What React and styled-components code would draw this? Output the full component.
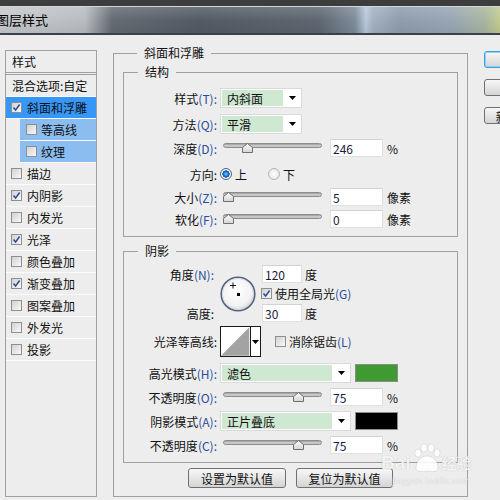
import styled, { createGlobalStyle } from "styled-components";

const GlobalStyle = createGlobalStyle`
  html, body {
    margin: 0;
    padding: 0;
  }
  body {
    width: 500px;
    height: 500px;
    overflow: hidden;
    background: #ededed;
    font-family: "Noto Sans CJK SC", "Liberation Sans", sans-serif;
    font-size: 12px;
    color: #111;
  }
`;

const Window = styled.div`
  position: relative;
  width: 500px;
  height: 500px;
  overflow: hidden;
  background: #ededed;
`;

const TitleBar = styled.div`
  height: 35px;
  box-sizing: border-box;
  border-top: 6px solid #3d3d3d;
  border-bottom: 2px solid #3a4148;
  box-shadow: inset 0 1px 0 #d4d7da;
  background: linear-gradient(
      to bottom,
      rgba(255, 255, 255, 0.16),
      rgba(255, 255, 255, 0) 55%,
      rgba(0, 0, 0, 0.06)
    ),
    linear-gradient(
      to right,
      #c6c9cc 0,
      #b8bcc0 85px,
      #636b73 112px,
      #525b64 200px,
      #5e6771 320px,
      #7e8b99 355px,
      #b8c8dc 366px,
      #a3b1c1 373px,
      #8e9cac 400px,
      #97a5b5 450px,
      #a9b5a0 485px,
      #c2ca90 500px
    );
  display: flex;
  align-items: center;
  overflow: hidden;
`;

const TitleText = styled.span`
  margin-left: -4px;
  font-size: 13px;
  color: #000;
  white-space: nowrap;
`;

const Body = styled.div`
  display: flex;
  align-items: flex-start;
  padding: 10px 0 0 5px;
`;

/* ---------- left list ---------- */

const StyleList = styled.div`
  width: 92px;
  height: 447px;
  flex-shrink: 0;
  box-sizing: border-box;
  margin-top: 5px;
  border: 1px solid #a0a0a0;
  display: flex;
  flex-direction: column;
`;

const ListHeader = styled.div`
  height: 24px;
  box-sizing: border-box;
  padding-left: 6px;
  display: flex;
  align-items: center;
  border-bottom: 3px double #a0a0a0;
`;

const ListRow = styled.div`
  height: 22px;
  box-sizing: border-box;
  display: flex;
  align-items: center;
  gap: ${({ $sub }) => ($sub ? 4 : 5)}px;
  margin-left: ${({ $sub }) => ($sub ? 14 : 0)}px;
  padding-left: ${({ $plain, $sub }) => ($plain || $sub ? 6 : 5)}px;
  border-bottom: 1px solid #fbfbfb;
  background: ${({ $active, $sub }) =>
    $active ? "#3797f7" : $sub ? "#8bbdf0" : "transparent"};
  white-space: nowrap;
`;

/* ---------- controls ---------- */

const CheckBox = styled.span`
  width: 11px;
  height: 11px;
  box-sizing: border-box;
  flex-shrink: 0;
  margin-left: ${({ $ml }) => $ml || 0}px;
  border: 1px solid #8f8f8f;
  background: linear-gradient(135deg, #d2d2d2, #f8f8f8);
  display: inline-flex;
  align-items: center;
  justify-content: center;
`;

function Check({ checked, ml }) {
  return (
    <CheckBox $ml={ml}>
      {checked && (
        <svg width="9" height="9" viewBox="0 0 9 9">
          <path
            d="M1.5 4.5 L3.6 7 L7.6 1.5"
            fill="none"
            stroke="#2f4c9c"
            strokeWidth="1.5"
          />
        </svg>
      )}
    </CheckBox>
  );
}

const Group = styled.fieldset`
  margin: ${({ $mt }) => $mt || 0}px 0 0 ${({ $ml }) => $ml || 0}px;
  padding: ${({ $pad }) => $pad};
  width: ${({ $w }) => ($w ? `${$w}px` : "auto")};
  flex-shrink: 0;
  box-sizing: border-box;
  border: 1px solid #a0a0a0;
  min-width: 0;
`;

const Legend = styled.legend`
  margin-left: 14px;
  padding: 0 7px;
  line-height: 16px;
  font-size: 12px;
`;

const Row = styled.div`
  display: flex;
  align-items: center;
  height: ${({ $h }) => $h || 20}px;
  margin-top: ${({ $mt }) => $mt || 0}px;
  white-space: nowrap;
`;

const Label = styled.span`
  width: 93px;
  padding-right: 3px;
  flex-shrink: 0;
  text-align: right;
  white-space: nowrap;
`;

const Key = styled.span`
  color: #2a4c9c;
`;

function Lbl({ text, k }) {
  return (
    <Label>
      {text}
      {k ? <Key>({k}):</Key> : ":"}
    </Label>
  );
}

const SelectBox = styled.div`
  width: ${({ $w }) => $w}px;
  height: 20px;
  flex-shrink: 0;
  box-sizing: border-box;
  border: 1px solid #d9d9d9;
  background: #fff;
  display: flex;
`;

const SelectValue = styled.div`
  flex: 1;
  margin: 1px 0 1px 1px;
  padding-left: 5px;
  background: #cfe8d1;
  display: flex;
  align-items: center;
`;

const CaretArea = styled.div`
  width: ${({ $w }) => $w || 18}px;
  display: flex;
  align-items: center;
  justify-content: center;
`;

const Caret = () => (
  <svg width="7" height="4" viewBox="0 0 7 4">
    <path d="M0 0 H7 L3.5 4 Z" fill="#000" />
  </svg>
);

function Select({ w, value }) {
  return (
    <SelectBox $w={w}>
      <SelectValue>{value}</SelectValue>
      <CaretArea>
        <Caret />
      </CaretArea>
    </SelectBox>
  );
}

const SliderWrap = styled.div`
  position: relative;
  width: 102px;
  height: 12px;
  flex-shrink: 0;
`;

const Track = styled.div`
  margin: 1px 0 0 3px;
  height: 5px;
  box-sizing: border-box;
  border: 1px solid #8c8c8c;
  border-radius: 3px;
  background: linear-gradient(#9a9a9a, #d2d2d2 60%, #bdbdbd);
`;

const Thumb = styled.svg`
  position: absolute;
  top: 1px;
`;

function Slider({ at }) {
  return (
    <SliderWrap>
      <Track />
      <Thumb width="11" height="10" viewBox="0 0 11 10" style={{ left: at }}>
        <defs>
          <linearGradient id="tg" x1="0" y1="0" x2="0" y2="1">
            <stop offset="0" stopColor="#ffffff" />
            <stop offset="1" stopColor="#d4d4d4" />
          </linearGradient>
        </defs>
        <path
          d="M5.5 0.5 L10.5 4.5 V9.5 H0.5 V4.5 Z"
          fill="url(#tg)"
          stroke="#6f6f6f"
        />
      </Thumb>
    </SliderWrap>
  );
}

const NumInput = styled.input`
  width: ${({ $w }) => $w || 53}px;
  height: 18px;
  flex-shrink: 0;
  box-sizing: border-box;
  margin: 0 0 0 ${({ $ml }) => $ml ?? 8}px;
  padding: 0 0 0 2px;
  border: 1px solid #e0e0e0;
  border-top-color: #d2d2d2;
  background: #fff;
  font: inherit;
  font-size: 12px;
  color: #1a1a3a;
  outline: none;
`;

const Unit = styled.span`
  margin-left: ${({ $ml }) => $ml || 4}px;
`;

const Radio = styled.span`
  width: 12px;
  height: 12px;
  box-sizing: border-box;
  flex-shrink: 0;
  margin-left: ${({ $ml }) => $ml || 0}px;
  border-radius: 50%;
  border: 1px solid ${({ $on }) => ($on ? "#4d6185" : "#b4b4b4")};
  background: ${({ $on }) =>
    $on
      ? "radial-gradient(circle, #7fd0ff 0, #1e7fdc 2px, #0f4f9c 3.4px, #ffffff 3.9px, #e4e4e4 100%)"
      : "radial-gradient(circle, #ffffff 0, #e0e0e0 100%)"};
`;

const RadioText = styled.span`
  margin-left: 3px;
`;

const AngleGrid = styled.div`
  display: grid;
  grid-template-columns: 93px 45px auto;
  grid-template-rows: 18px 21px 18px;
  align-items: center;
  white-space: nowrap;
`;

const GridLabel = styled.span`
  grid-column: 1;
  grid-row: ${({ $row }) => $row};
  text-align: right;
  padding-right: 3px;
`;

const DialCell = styled.div`
  grid-column: 2;
  grid-row: 1 / 4;
  padding-left: 3px;
  display: flex;
  align-items: center;
`;

const Cell = styled.div`
  grid-column: 3;
  grid-row: ${({ $row }) => $row};
  display: flex;
  align-items: center;
`;

function Dial() {
  return (
    <svg width="36" height="36" viewBox="0 0 36 36">
      <defs>
        <radialGradient id="dg" cx="0.45" cy="0.4" r="0.6">
          <stop offset="0" stopColor="#ffffff" />
          <stop offset="0.75" stopColor="#f2f2f2" />
          <stop offset="1" stopColor="#d6d6d6" />
        </radialGradient>
      </defs>
      <circle cx="18" cy="18" r="16.8" fill="url(#dg)" stroke="#56647f" strokeWidth="1.6" />
      <circle cx="18" cy="18" r="15.6" fill="none" stroke="#c9ccd2" strokeWidth="0.6" />
      <rect x="17" y="17" width="3" height="3" fill="#000" />
      <path d="M13 6.5 V12.5 M10 9.5 H16" stroke="#000" strokeWidth="0.9" />
    </svg>
  );
}

const Contour = styled.div`
  width: 41px;
  height: 31px;
  flex-shrink: 0;
  box-sizing: border-box;
  border: 1px solid #1a1a1a;
  background: #fff;
  display: flex;
`;

const ContourPreview = styled.svg`
  display: block;
  border-right: 1px solid #1a1a1a;
`;

const Swatch = styled.div`
  width: 43px;
  height: 18px;
  flex-shrink: 0;
  box-sizing: border-box;
  margin-left: 4px;
  border: 1px solid #8c8c8c;
  background: ${({ $color }) => $color};
`;

const ButtonRow = styled.div`
  display: flex;
  justify-content: center;
  gap: 10px;
  margin-top: 5px;
  height: 20px;
`;

const Button = styled.button`
  width: ${({ $w }) => $w || 98}px;
  height: ${({ $h }) => $h || 20}px;
  flex-shrink: 0;
  box-sizing: border-box;
  padding: 0;
  border: 1px solid ${({ $primary }) => ($primary ? "#3c9fe0" : "#707070")};
  box-shadow: ${({ $primary }) => ($primary ? "inset 0 0 0 1px #8fd0f5" : "none")};
  border-radius: 3px;
  background: linear-gradient(#f7f7f7, #e6e6e6 50%, #d4d4d4);
  font: inherit;
  font-size: 12px;
  color: #111;
  white-space: nowrap;
  overflow: hidden;
`;

const SideButtons = styled.div`
  display: flex;
  flex-direction: column;
  gap: 11px;
  margin: 6px 0 0 16px;
`;

/* ---------- watermark ---------- */

const Watermark = styled.div`
  position: absolute;
  left: 381px;
  top: 443px;
  color: rgba(255, 255, 255, 0.85);
  text-shadow: 0 0 1px rgba(0, 0, 0, 0.25);
  pointer-events: none;
  display: flex;
  flex-direction: column;
`;

const MarkLine = styled.div`
  display: flex;
  align-items: flex-end;
  font-family: "Liberation Sans", sans-serif;
  font-weight: bold;
  font-size: 19px;
  line-height: 20px;
`;

const MarkCn = styled.span`
  font-family: "Noto Sans CJK SC", sans-serif;
  font-weight: bold;
  font-size: 15px;
  margin-left: 1px;
`;

const MarkUrl = styled.span`
  margin: 3px 0 0 11px;
  font-family: "Liberation Sans", sans-serif;
  font-size: 9px;
  letter-spacing: 0.3px;
`;

const effects = [
  { name: "斜面和浮雕", checked: true, active: true },
  { name: "等高线", sub: true },
  { name: "纹理", sub: true },
  { name: "描边" },
  { name: "内阴影", checked: true },
  { name: "内发光" },
  { name: "光泽", checked: true },
  { name: "颜色叠加" },
  { name: "渐变叠加", checked: true },
  { name: "图案叠加" },
  { name: "外发光" },
  { name: "投影" },
];

export default function App() {
  return (
    <Window>
      <GlobalStyle />
      <TitleBar>
        <TitleText>图层样式</TitleText>
      </TitleBar>

      <Body>
        <StyleList>
          <ListHeader>样式</ListHeader>
          <ListRow $plain>混合选项:自定</ListRow>
          {effects.map((e) => (
            <ListRow key={e.name} $sub={e.sub} $active={e.active}>
              <Check checked={e.checked} />
              {e.name}
            </ListRow>
          ))}
        </StyleList>

        <Group $w={355} $ml={16} $pad="3px 9px 8px">
          <Legend>斜面和浮雕</Legend>

          <Group $pad="8px 0 8px">
            <Legend>结构</Legend>
            <Row>
              <Lbl text="样式" k="T" />
              <Select w={82} value="内斜面" />
            </Row>
            <Row $mt={6}>
              <Lbl text="方法" k="Q" />
              <Select w={82} value="平滑" />
            </Row>
            <Row $mt={5} $h={18}>
              <Lbl text="深度" k="D" />
              <Slider at={21.5} />
              <NumInput readOnly value="246" />
              <Unit>%</Unit>
            </Row>
            <Row $mt={8} $h={18}>
              <Lbl text="方向" />
              <Radio $on />
              <RadioText>上</RadioText>
              <Radio $ml={21} />
              <RadioText>下</RadioText>
            </Row>
            <Row $mt={5} $h={18}>
              <Lbl text="大小" k="Z" />
              <Slider at={2.5} />
              <NumInput readOnly value="5" />
              <Unit>像素</Unit>
            </Row>
            <Row $mt={4} $h={18}>
              <Lbl text="软化" k="F" />
              <Slider at={2.5} />
              <NumInput readOnly value="0" />
              <Unit>像素</Unit>
            </Row>
          </Group>

          <Group $mt={6} $pad="6px 0 8px">
            <Legend>阴影</Legend>
            <AngleGrid>
              <GridLabel $row={1}>
                角度<Key>(N):</Key>
              </GridLabel>
              <DialCell>
                <Dial />
              </DialCell>
              <Cell $row={1}>
                <NumInput readOnly value="120" $w={40} $ml={0} />
                <Unit $ml={3}>度</Unit>
              </Cell>
              <Cell $row={2}>
                <Check checked ml={-1} />
                <Unit $ml={3}>
                  使用全局光<Key>(G)</Key>
                </Unit>
              </Cell>
              <GridLabel $row={3}>高度:</GridLabel>
              <Cell $row={3}>
                <NumInput readOnly value="30" $w={40} $ml={0} />
                <Unit $ml={3}>度</Unit>
              </Cell>
            </AngleGrid>

            <Row $mt={4} $h={31}>
              <Lbl text="光泽等高线" />
              <Contour>
                <ContourPreview width="30" height="29" viewBox="0 0 30 29">
                  <path d="M0 29 L29 0 V29 Z" fill="#a3a3a3" />
                </ContourPreview>
                <CaretArea $w={9}>
                  <Caret />
                </CaretArea>
              </Contour>
              <Check ml={14} />
              <Unit $ml={3}>
                消除锯齿<Key>(L)</Key>
              </Unit>
            </Row>

            <Row $mt={6}>
              <Lbl text="高光模式" k="H" />
              <Select w={131} value="滤色" />
              <Swatch $color="#3f9a32" />
            </Row>
            <Row $mt={5} $h={18}>
              <Lbl text="不透明度" k="O" />
              <Slider at={72.5} />
              <NumInput readOnly value="75" />
              <Unit>%</Unit>
            </Row>
            <Row $mt={5}>
              <Lbl text="阴影模式" k="A" />
              <Select w={131} value="正片叠底" />
              <Swatch $color="#000000" />
            </Row>
            <Row $mt={5} $h={18}>
              <Lbl text="不透明度" k="C" />
              <Slider at={72.5} />
              <NumInput readOnly value="75" />
              <Unit>%</Unit>
            </Row>
          </Group>

          <ButtonRow>
            <Button>设置为默认值</Button>
            <Button $w={97}>复位为默认值</Button>
          </ButtonRow>
        </Group>

        <SideButtons>
          <Button $primary $w={100} $h={17}>确定</Button>
          <Button $w={100} $h={17}>取消</Button>
          <Button $w={100} $h={17}>新建样式(W)...</Button>
        </SideButtons>
      </Body>

      <Watermark>
        <MarkLine>
          Bai
          <svg width="30" height="30" viewBox="0 0 30 30">
            <g fill="rgba(255,255,255,0.85)" stroke="rgba(0,0,0,0.15)" strokeWidth="0.6">
              <ellipse cx="7" cy="10" rx="3.2" ry="4" />
              <ellipse cx="13" cy="5" rx="3.2" ry="4" />
              <ellipse cx="20" cy="5" rx="3.2" ry="4" />
              <ellipse cx="26" cy="10" rx="3" ry="4" />
              <path d="M5 25 C5 17 11 13 16 13 C21 13 27 17 27 25 C27 29 22 29 16 28 C10 29 5 29 5 25 Z" />
            </g>
          </svg>
          <MarkCn>经验</MarkCn>
        </MarkLine>
        <MarkUrl>jingyan.baidu.com</MarkUrl>
      </Watermark>
    </Window>
  );
}
